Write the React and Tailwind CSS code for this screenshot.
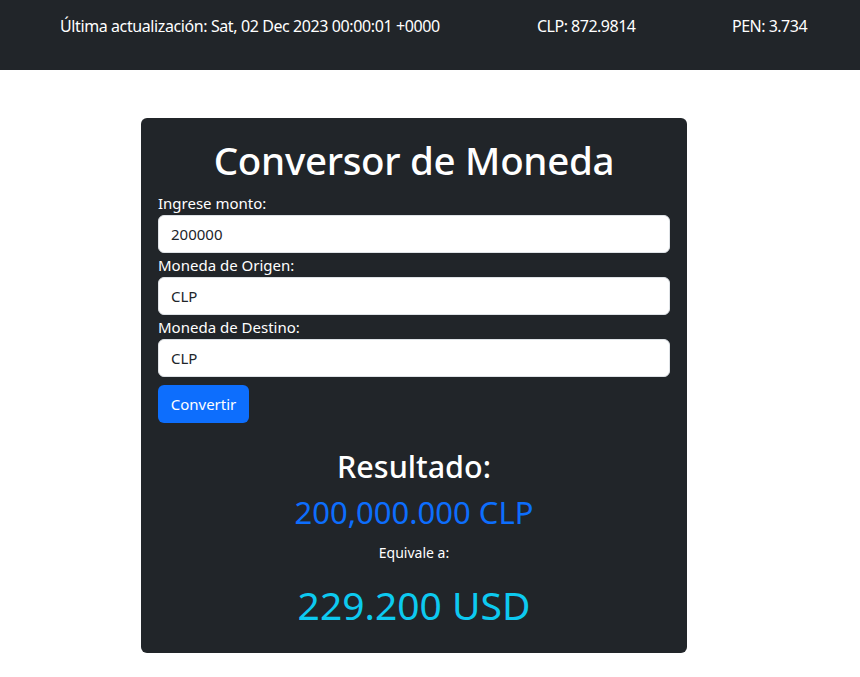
export default function App() {
  return (
    <div className="min-h-[677px] bg-white font-['Noto_Sans',sans-serif]">
      <header className="h-[70px] bg-[#212529] text-white text-[16px] flex items-start pt-[14px]">
        <span className="ml-[60px] w-[477px] tracking-[-0.4px] leading-[24px]">Última actualización: Sat, 02 Dec 2023 00:00:01 +0000</span>
        <span className="w-[195px] tracking-[-0.5px] leading-[24px]">CLP: 872.9814</span>
        <span className="tracking-[-0.5px] leading-[24px]">PEN: 3.734</span>
      </header>
      <main className="pt-[48px] flex">
        <div className="ml-[141px] w-[546px] h-[535px] bg-[#212529] rounded-[6px] px-[17px] pt-[18px] text-white">
          <h1 className="text-center text-[38.5px] leading-[48px] font-medium tracking-[-0.3px]">Conversor de Moneda</h1>
          <div className="mt-[7px] flex flex-col">
            <label className="text-[15px] leading-[24px]">Ingrese monto:</label>
            <div className="h-[38px] bg-white rounded-[6px] border border-[#dee2e6] px-[12px] flex items-center text-[15px] text-[#212529]">200000</div>
            <label className="text-[15px] leading-[24px]">Moneda de Origen:</label>
            <div className="h-[38px] bg-white rounded-[6px] border border-[#dee2e6] px-[12px] flex items-center text-[15px] text-[#212529]">CLP</div>
            <label className="text-[15px] leading-[24px]">Moneda de Destino:</label>
            <div className="h-[38px] bg-white rounded-[6px] border border-[#dee2e6] px-[12px] flex items-center text-[15px] text-[#212529]">CLP</div>
            <button className="mt-[8px] self-start h-[38px] w-[91px] bg-[#0d6efd] rounded-[6px] text-[15px] text-white">Convertir</button>
          </div>
          <div className="mt-[23px] flex flex-col items-center">
            <div className="text-[30.5px] leading-[40px] font-medium">Resultado:</div>
            <div className="mt-[6px] text-[31px] leading-[40px] text-[#0d6efd]">200,000.000 CLP</div>
            <div className="mt-[11px] text-[14px] leading-[20px]">Equivale a:</div>
            <div className="mt-[17px] text-[39px] leading-[50px] text-[#0dcaf0]">229.200 USD</div>
          </div>
        </div>
      </main>
    </div>
  );
}
